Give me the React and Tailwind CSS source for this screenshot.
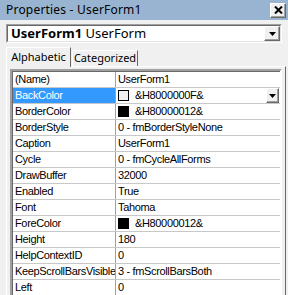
const rows = [
  { name: "(Name)", value: "UserForm1" },
  { name: "BackColor", value: "&H8000000F&", swatch: "bg-[#f0f0f0]", selected: true, button: true },
  { name: "BorderColor", value: "&H80000012&", swatch: "bg-black" },
  { name: "BorderStyle", value: "0 - fmBorderStyleNone" },
  { name: "Caption", value: "UserForm1" },
  { name: "Cycle", value: "0 - fmCycleAllForms" },
  { name: "DrawBuffer", value: "32000" },
  { name: "Enabled", value: "True" },
  { name: "Font", value: "Tahoma" },
  { name: "ForeColor", value: "&H80000012&", swatch: "bg-black" },
  { name: "Height", value: "180" },
  { name: "HelpContextID", value: "0" },
  { name: "KeepScrollBarsVisible", value: "3 - fmScrollBarsBoth" },
  { name: "Left", value: "0" },
  { name: "", value: "" }, // next row, only its top edge shows
];

// small black down arrow used on the combo buttons
function DownArrow() {
  return (
    <svg width="7" height="4" viewBox="0 0 7 4">
      <path d="M0 0h7L3.5 4z" fill="#000" />
    </svg>
  );
}

// raised 3D button like the classic win32 controls
function RaisedButton({ className, children }) {
  return (
    <div
      className={`flex items-center justify-center bg-[#f0f0f0] border border-t-white border-l-white border-r-[#696969] border-b-[#696969] shadow-[inset_-1px_-1px_0_#a0a0a0] ${className}`}
    >
      {children}
    </div>
  );
}

function PropertyRow({ row }) {
  return (
    <div className="flex h-[16px] border-b border-[#c8c8c8]">
      <div
        className={`w-[103px] shrink-0 pl-[2px] leading-[15px] border-r border-[#a0a0a0] whitespace-nowrap overflow-hidden ${
          row.selected ? "bg-[#3399ff] text-white" : "text-black"
        }`}
      >
        {row.name}
      </div>
      <div className="flex-1 flex items-center pl-[2px] min-w-0 text-black">
        {row.swatch && (
          <div className={`w-[11px] h-[11px] border border-black mr-[6px] shrink-0 ${row.swatch}`} />
        )}
        <span className="flex-1 whitespace-nowrap leading-[15px]">{row.value}</span>
        {row.button && (
          <RaisedButton className="w-[13px] h-[15px] mr-[1px]">
            <DownArrow />
          </RaisedButton>
        )}
      </div>
    </div>
  );
}

export default function App() {
  return (
    <div className="w-[288px] h-[295px] overflow-hidden bg-[#f0f0f0] font-['Liberation_Sans',Arial,sans-serif] text-[11px]">
      {/* Title bar */}
      <div className="h-[20px] bg-[#99b4d1] flex items-center justify-between pl-[6px] pr-[2px]">
        <span className="text-[12px] font-['Noto_Sans',sans-serif] text-black leading-none tracking-[0.2px]">
          Properties - UserForm1
        </span>
        <RaisedButton className="w-[16px] h-[15px]">
          <svg width="9" height="8" viewBox="0 0 9 8">
            <path d="M1 0.5l7 7M8 0.5l-7 7" stroke="#000" strokeWidth="2" />
          </svg>
        </RaisedButton>
      </div>

      {/* Object combo */}
      <div className="mt-[4px] ml-[6px] w-[276px] h-[19px] border border-t-[#a0a0a0] border-l-[#a0a0a0] border-r-white border-b-white">
        <div className="h-full flex items-center bg-white border border-t-[#696969] border-l-[#696969] border-r-[#e3e3e3] border-b-[#e3e3e3]">
          <span className="flex-1 pl-[3px] text-[13px] font-['Noto_Sans',sans-serif] whitespace-nowrap leading-none">
            <b>UserForm1</b> UserForm
          </span>
          <RaisedButton className="w-[16px] h-full">
            <DownArrow />
          </RaisedButton>
        </div>
      </div>

      {/* Tabs */}
      <div className="flex items-end gap-[1px] ml-[6px] mt-[3px] h-[20px] text-[11px] font-['Noto_Sans',sans-serif]">
        <div className="h-[20px] w-[65px] bg-[#f0f0f0] border-l border-t border-r border-l-white border-t-white border-r-[#696969] flex items-center justify-center relative z-10 -mb-px">
          Alphabetic
        </div>
        <div className="h-[16px] w-[66px] border-l border-t border-r border-l-white border-t-white border-r-[#696969] flex items-center justify-center">
          Categorized
        </div>
      </div>

      {/* Tab page */}
      <div className="ml-[6px] w-[280px] h-[300px] border-t border-l border-r border-t-white border-l-white border-r-[#696969] pt-[2px] pl-[3px] pr-[3px]">
        <div className="border-2 border-t-[#a0a0a0] border-l-[#a0a0a0] border-r-white border-b-white">
          <div className="bg-white border-t border-l border-[#696969] tracking-[-0.35px]">
            {rows.map((row, i) => (
              <PropertyRow key={i} row={row} />
            ))}
          </div>
        </div>
      </div>
    </div>
  );
}
